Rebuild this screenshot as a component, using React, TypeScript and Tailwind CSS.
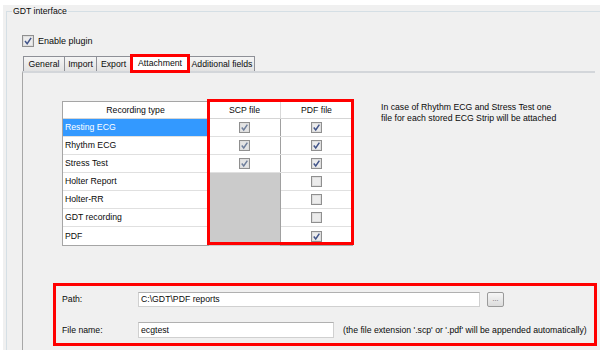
import React from "react";

function Box({ checked, size = 11, light = false }: { checked: boolean; size?: number; light?: boolean }) {
  const s = size;
  return (
    <svg width={s} height={s} viewBox={`0 0 ${s} ${s}`} className="block">
      <rect x={0.5} y={0.5} width={s - 1} height={s - 1} fill="#f4f4f4" stroke="#8f8f8f" />
      <rect x={1.5} y={1.5} width={s - 3} height={s - 3} fill={light ? "#e4e4e4" : "#ececec"} stroke="#dedede" />
      {checked && (
        <path
          d={`M${s * 0.25} ${s * 0.5} L${s * 0.43} ${s * 0.72} L${s * 0.76} ${s * 0.24}`}
          fill="none"
          stroke={light ? "#6f7f9c" : "#42558a"}
          strokeWidth={1.5}
        />
      )}
    </svg>
  );
}

const rows: { name: string; scp: boolean | null; pdf: boolean }[] = [
  { name: "Resting ECG", scp: true, pdf: true },
  { name: "Rhythm ECG", scp: true, pdf: true },
  { name: "Stress Test", scp: true, pdf: true },
  { name: "Holter Report", scp: null, pdf: false },
  { name: "Holter-RR", scp: null, pdf: false },
  { name: "GDT recording", scp: null, pdf: false },
  { name: "PDF", scp: null, pdf: true },
];

export default function App() {
  return (
    <div
      className="w-[614px] h-[357px] bg-white overflow-hidden pl-[3px] pt-[5px] text-[8.7px] leading-[11px] text-[#0a0a0a]"
      style={{ fontFamily: '"Liberation Sans", Arial, sans-serif' }}
    >
      <div className="w-[597px] h-[345px] bg-[#f0f0f0] overflow-hidden">
        {/* group box */}
        <div className="relative ml-[3px] mt-[6px] w-[620px] h-[360px] border-l border-t border-[#d5dfe5]">
          <div className="absolute left-[5px] top-[-6px] bg-[#f0f0f0] px-[1px] leading-[11px]">GDT interface</div>

          <div className="flex items-center pl-[15px] pt-[23px]">
            <Box checked size={12} />
            <span className="ml-[4px] text-[9px]">Enable plugin</span>
          </div>

          {/* tabs */}
          <div className="ml-[15px] mt-[8px]">
            <div className="flex items-end h-[16px] pl-[1px]">
              <div className="w-[42px] h-[15px] border-l border-t border-r border-[#8e9097] bg-gradient-to-b from-[#f5f5f5] to-[#e2e2e2] flex items-center justify-center">
                General
              </div>
              <div className="w-[32px] h-[15px] border-t border-r border-[#8e9097] bg-gradient-to-b from-[#f5f5f5] to-[#e2e2e2] flex items-center justify-center">
                Import
              </div>
              <div className="w-[33px] h-[15px] border-t border-[#8e9097] bg-gradient-to-b from-[#f5f5f5] to-[#e2e2e2] flex items-center justify-center">
                Export
              </div>
              <div className="relative z-10 w-[60px] h-[19px] -mb-[2px] border-[3px] border-[#ff0000] bg-white flex items-center justify-center">
                Attachment
              </div>
              <div className="w-[65px] h-[15px] border-t border-r border-[#8e9097] bg-gradient-to-b from-[#f5f5f5] to-[#e2e2e2] flex items-center justify-center">
                Additional fields
              </div>
            </div>

            {/* tab panel */}
            <div className="w-[573px] h-[300px] border-l border-t-2 border-l-[#a7a7a7] border-t-[#d3d6da]">
              <div className="flex items-start ml-[39px] mt-[28px]">
                {/* table */}
                <div className="relative">
                  <div className="w-[291px] border border-[#a5a5a5] bg-white">
                    <div className="flex h-[17px] border-b border-[#d5d5d5]">
                      <div className="w-[146px] border-r border-[#d8d8d8] flex items-center justify-center">Recording type</div>
                      <div className="w-[72px] border-r border-[#d8d8d8] flex items-center justify-center">SCP file</div>
                      <div className="w-[71px] flex items-center justify-center">PDF file</div>
                    </div>
                    {rows.map((r, i) => (
                      <div key={r.name} className={`flex h-[18px] ${i < rows.length - 1 ? "border-b border-[#e0e0e0]" : ""}`}>
                        <div
                          className={`w-[146px] border-r border-[#d8d8d8] flex items-center pl-[2px] ${
                            i === 0 ? "bg-[#3399ff] text-white" : ""
                          }`}
                        >
                          {r.name}
                        </div>
                        <div
                          className={`w-[72px] border-r border-[#a0a0a0] flex items-center justify-center ${
                            r.scp === null ? "bg-[#cbcbcb] -mb-[1px]" : ""
                          }`}
                        >
                          {r.scp !== null && <Box checked={r.scp} light />}
                        </div>
                        <div className="w-[71px] flex items-center justify-center">
                          <Box checked={r.pdf} />
                        </div>
                      </div>
                    ))}
                  </div>
                  <div className="absolute left-[145px] top-[-2px] w-[147px] h-[146px] border-[3px] border-[#ff0000]" />
                </div>

                <div className="ml-[28px] mt-[1px] leading-[11px]">
                  <div>In case of Rhythm ECG and Stress Test one</div>
                  <div>file for each stored ECG Strip will be attached</div>
                </div>
              </div>

              {/* path box */}
              <div className="ml-[30px] mt-[37px] w-[544px] h-[63px] border-[3px] border-[#ff0000] pl-[6px] pt-[6px]">
                <div className="flex items-center h-[15px]">
                  <div className="w-[76px]">Path:</div>
                  <div className="w-[342px] h-[15px] bg-white border border-[#d0d0d0] border-t-[#b0b0b0] flex items-center pl-[2px]">
                    C:\GDT\PDF reports
                  </div>
                  <div className="ml-[7px] w-[17px] h-[15px] rounded-[2px] border border-[#9a9a9a] bg-gradient-to-b from-[#f6f6f6] to-[#dcdcdc] flex items-center justify-center text-[7px] text-[#555] pb-[2px]">
                    ...
                  </div>
                </div>
                <div className="flex items-center h-[16px] mt-[15px]">
                  <div className="w-[76px]">File name:</div>
                  <div className="w-[196px] h-[16px] bg-white border border-[#d0d0d0] border-t-[#b0b0b0] flex items-center pl-[2px]">
                    ecgtest
                  </div>
                  <div className="ml-[9px] whitespace-nowrap">
                    (the file extension '.scp' or '.pdf' will be appended automatically)
                  </div>
                </div>
              </div>
            </div>
          </div>
        </div>
      </div>
    </div>
  );
}
